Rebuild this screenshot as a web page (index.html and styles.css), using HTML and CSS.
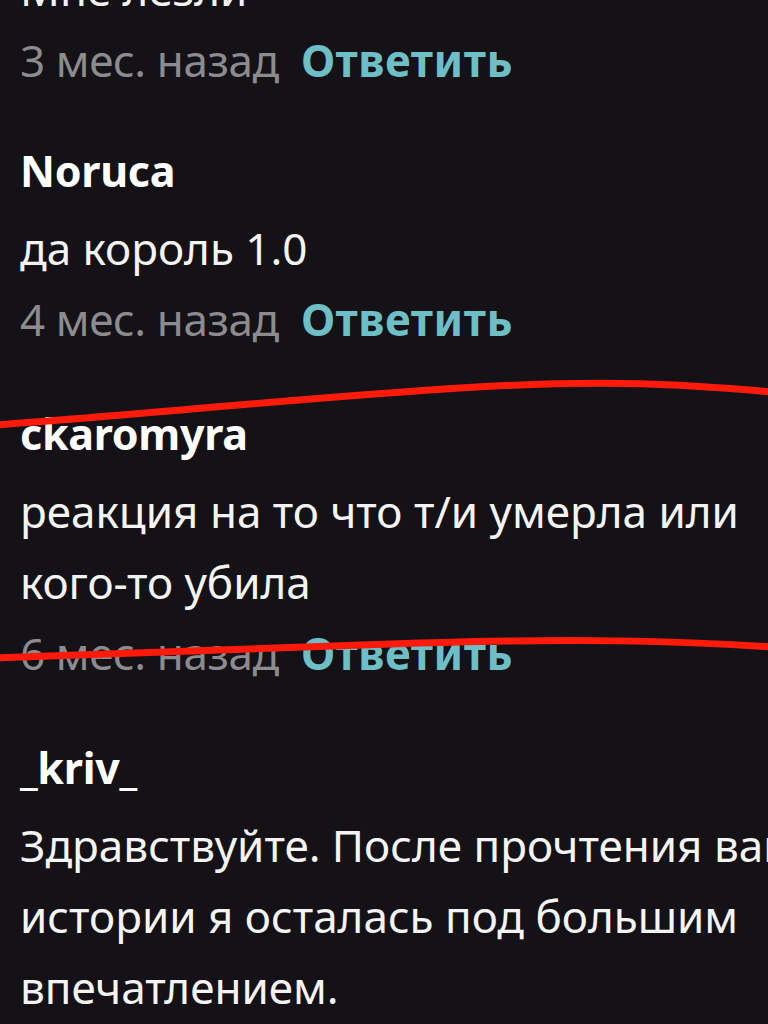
FILE: index.html
```html
<!DOCTYPE html>
<html>

<head>
  <title>Комментарии</title>

  <link rel="stylesheet" href="styles.css">
</head>

<body>
  <div class="comments">
    <div class="comment comment-cut">
      <div class="comment-text">Мне лезли</div>
      <div class="comment-meta">
        <span class="comment-date">3 мес. назад</span>
        <span class="comment-reply">Ответить</span>
      </div>
    </div>

    <div class="comment">
      <div class="comment-author">Noruca</div>
      <div class="comment-text">да король 1.0</div>
      <div class="comment-meta">
        <span class="comment-date">4 мес. назад</span>
        <span class="comment-reply">Ответить</span>
      </div>
    </div>

    <div class="comment">
      <div class="comment-author">ckaromyra</div>
      <div class="comment-text">реакция на то что т/и умерла или<br>кого-то убила</div>
      <div class="comment-meta">
        <span class="comment-date">6 мес. назад</span>
        <span class="comment-reply">Ответить</span>
      </div>
    </div>

    <div class="comment">
      <div class="comment-author">_kriv_</div>
      <div class="comment-text">Здравствуйте. После прочтения вашей<br>истории я осталась под большим<br>впечатлением.</div>
    </div>
  </div>

  <!-- Red marker strokes drawn over the screenshot -->
  <svg class="marker" width="768" height="1024" viewBox="0 0 768 1024">
    <path d="M-4 425 C 150 414, 300 398, 460 388 S 700 386, 772 392" />
    <path d="M-4 658 C 120 653, 260 648, 420 643 S 680 641, 772 647" />
  </svg>
</body>

</html>
```

FILE: styles.css
```css
html,
body {
  margin: 0;
  padding: 0;
  background: #141216;
  font-family: "Noto Sans", sans-serif;
  overflow: hidden;
  height: 1024px;
}

.comments {
  padding: 0 0 0 20px;
  margin-top: -46px;
}

.comment {
  margin-bottom: 43px;
}

.comment-cut {
  margin-bottom: 39px;
}

.comment-author {
  color: #FFFFFF;
  font-size: 43px;
  font-weight: 700;
  line-height: 71px;
  margin-bottom: 7px;
  letter-spacing: -0.3px;
}

.comment-text {
  color: #F4F4F4;
  font-size: 44px;
  line-height: 71px;
  white-space: nowrap;
}

.comment-meta {
  display: flex;
  gap: 22px;
  font-size: 44px;
  line-height: 71px;
}

.comment-date {
  color: #8C8B8E;
  letter-spacing: -0.4px;
}

.comment-reply {
  color: #6DBEC5;
  font-weight: 700;
  letter-spacing: 0.5px;
}

.marker {
  position: absolute;
  top: 0;
  left: 0;
  pointer-events: none;
}

.marker path {
  fill: none;
  stroke: #FF1A0A;
  stroke-width: 7;
  stroke-linecap: round;
}
```
